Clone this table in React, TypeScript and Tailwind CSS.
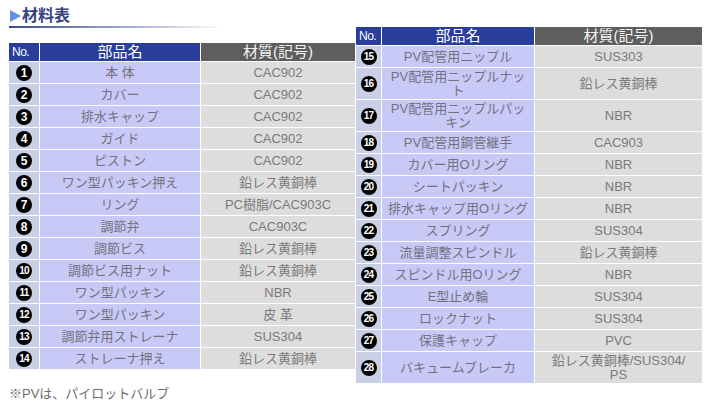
import type { ReactNode } from 'react';

type Part = { no: number; name: ReactNode; material: ReactNode; tall?: boolean };

const leftParts: Part[] = [
  { no: 1, name: '本 体', material: 'CAC902' },
  { no: 2, name: 'カバー', material: 'CAC902' },
  { no: 3, name: '排水キャップ', material: 'CAC902' },
  { no: 4, name: 'ガイド', material: 'CAC902' },
  { no: 5, name: 'ピストン', material: 'CAC902' },
  { no: 6, name: 'ワン型パッキン押え', material: '鉛レス黄銅棒' },
  { no: 7, name: 'リング', material: 'PC樹脂/CAC903C' },
  { no: 8, name: '調節弁', material: 'CAC903C' },
  { no: 9, name: '調節ビス', material: '鉛レス黄銅棒' },
  { no: 10, name: '調節ビス用ナット', material: '鉛レス黄銅棒' },
  { no: 11, name: 'ワン型パッキン', material: 'NBR' },
  { no: 12, name: 'ワン型パッキン', material: '皮 革' },
  { no: 13, name: '調節弁用ストレーナ', material: 'SUS304' },
  { no: 14, name: 'ストレーナ押え', material: '鉛レス黄銅棒' },
];

const rightParts: Part[] = [
  { no: 15, name: 'PV配管用ニップル', material: 'SUS303' },
  { no: 16, name: <>PV配管用ニップルナッ<br />ト</>, material: '鉛レス黄銅棒', tall: true },
  { no: 17, name: <>PV配管用ニップルパッ<br />キン</>, material: 'NBR', tall: true },
  { no: 18, name: 'PV配管用鋼管継手', material: 'CAC903' },
  { no: 19, name: 'カバー用Oリング', material: 'NBR' },
  { no: 20, name: 'シートパッキン', material: 'NBR' },
  { no: 21, name: '排水キャップ用Oリング', material: 'NBR' },
  { no: 22, name: 'スプリング', material: 'SUS304' },
  { no: 23, name: '流量調整スピンドル', material: '鉛レス黄銅棒' },
  { no: 24, name: 'スピンドル用Oリング', material: 'NBR' },
  { no: 25, name: 'E型止め輪', material: 'SUS304' },
  { no: 26, name: 'ロックナット', material: 'SUS304' },
  { no: 27, name: '保護キャップ', material: 'PVC' },
  { no: 28, name: 'バキュームブレーカ', material: <>鉛レス黄銅棒/SUS304/<br />PS</>, tall: true },
];

function Badge({ n }: { n: number }) {
  return (
    <div className="flex size-[16px] items-center justify-center rounded-full bg-black font-bold leading-none text-white">
      <span className={n > 9 ? 'text-[10px] tracking-[-0.8px]' : 'text-[12px]'}>{n}</span>
    </div>
  );
}

function PartsTable({ parts, cols }: { parts: Part[]; cols: string }) {
  return (
    <div className={`grid gap-px bg-white ${cols}`}>
      <div className="flex h-[18px] items-center bg-[#293d9b] pl-[3px] text-[12px] tracking-[-0.5px] text-white">No.</div>
      <div className="flex h-[18px] items-center justify-center bg-[#293d9b] text-[15px] text-white">部品名</div>
      <div className="flex h-[18px] items-center justify-center bg-[#5e5e5e] text-[15px] text-[#f4f4f4]">材質(記号)</div>
      {parts.map((p) => (
        <div key={p.no} className="contents">
          <div className={`flex items-center justify-center bg-[#c9d0e6] ${p.tall ? 'h-[31px]' : 'h-[21px]'}`}>
            <Badge n={p.no} />
          </div>
          <div className={`flex items-center justify-center bg-[#c9c9f7] text-center text-[13px] leading-[14px] text-[#72727e] ${p.tall ? 'h-[31px]' : 'h-[21px]'}`}>
            <span>{p.name}</span>
          </div>
          <div className={`flex items-center justify-center bg-[#dddddd] text-center text-[13px] leading-[14px] text-[#7a7a7a] ${p.tall ? 'h-[31px]' : 'h-[21px]'}`}>
            <span>{p.material}</span>
          </div>
        </div>
      ))}
    </div>
  );
}

export default function App() {
  return (
    <div
      className="flex h-[403px] w-[720px] bg-white"
      style={{ fontFamily: '"Liberation Sans", "Noto Sans CJK JP", sans-serif' }}
    >
      <div className="flex w-[355px] flex-col pl-[9px] pt-[8px]">
        <div className="flex h-[16px] shrink-0 items-center gap-[1px] pl-[1px] leading-none">
          <svg width="11" height="12" viewBox="0 0 11 12">
            <path d="M0 0 L11 6 L0 12 Z" fill="#5f92da" />
          </svg>
          <span className="text-[16px] font-bold text-[#34427e]">材料表</span>
        </div>
        <div className="mt-[2px] h-[2px] w-[215px] shrink-0 bg-linear-to-r from-[#3e4c86] via-[#9aa2c6] to-white" />
        <div className="mt-[15px] shrink-0">
          <PartsTable parts={leftParts} cols="grid-cols-[30px_160px_154px]" />
        </div>
        <div className="mt-[17px] shrink-0 text-[13px] leading-[15px] text-[#6e6e6e]">※PVは、パイロットバルブ</div>
      </div>
      <div className="ml-px pt-[27px]">
        <PartsTable parts={rightParts} cols="grid-cols-[25px_152px_167px]" />
      </div>
    </div>
  );
}
